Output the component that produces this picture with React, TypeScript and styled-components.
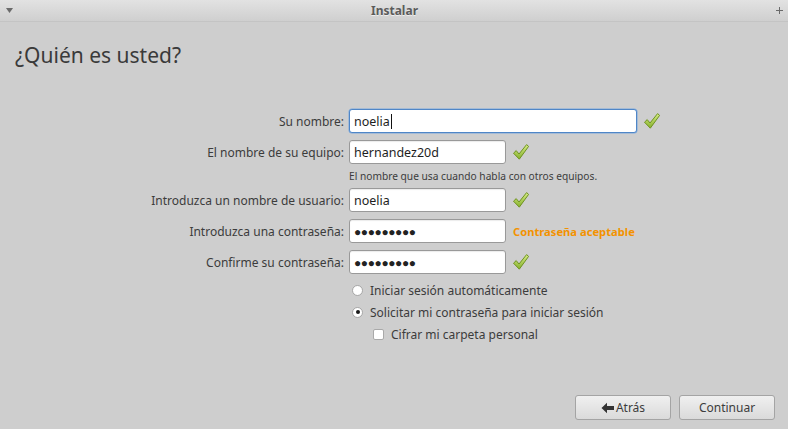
import React from "react";
import styled, { createGlobalStyle } from "styled-components";

const Global = createGlobalStyle`
  html, body { margin: 0; padding: 0; }
  body {
    width: 788px; height: 429px; overflow: hidden;
    background: #cecece;
    font-family: "Noto Sans", "Open Sans", sans-serif;
    color: #3c3c3c;
  }
  #root { width: 788px; height: 429px; }
`;

const Window = styled.div`
  width: 788px;
  height: 429px;
  display: flex;
  flex-direction: column;
  background: #cecece;
`;

const TitleBar = styled.div`
  height: 22px;
  flex: none;
  display: flex;
  align-items: center;
  justify-content: space-between;
  padding: 0 5px 0 6px;
  background: linear-gradient(#e2e2e2, #cfcfcf);
  border-bottom: 1px solid #c4c4c4;
  box-sizing: border-box;
`;

const TitleText = styled.div`
  font-size: 12px;
  font-weight: bold;
  color: #5b5b5b;
  text-shadow: 0 1px 0 #eeeeee;
`;

const Content = styled.div`
  flex: 1;
  display: flex;
  flex-direction: column;
  padding: 0 13px 9px 0;
`;

const Heading = styled.h1`
  margin: 19px 0 0 15px;
  font-size: 21px;
  font-weight: normal;
  color: #3a3a3a;
  line-height: 28px;
`;

const Form = styled.div`
  margin-top: 40px;
  display: flex;
  flex-direction: column;
`;

const Row = styled.div<{ $gap?: number }>`
  display: flex;
  align-items: center;
  height: 24px;
  margin-bottom: ${(p) => p.$gap ?? 7}px;
`;

const LabelCell = styled.div`
  width: 349px;
  flex: none;
  display: flex;
  justify-content: flex-end;
  padding-right: 5px;
  box-sizing: border-box;
  font-size: 12px;
  color: #3c3c3c;
`;

const Input = styled.div<{ $w: number; $focus?: boolean }>`
  width: ${(p) => p.$w}px;
  height: 24px;
  box-sizing: border-box;
  flex: none;
  background: #ffffff;
  border: 1px solid ${(p) => (p.$focus ? "#4f86c7" : "#999999")};
  border-radius: 3px;
  box-shadow: ${(p) => (p.$focus ? "0 0 0 0.5px #7aa7dd" : "inset 0 1px 1px rgba(0,0,0,0.08)")};
  display: flex;
  align-items: center;
  padding-left: 4px;
  font-size: 12.5px;
  color: #1e1e1e;
`;

const Caret = styled.span`
  display: inline-block;
  width: 1px;
  height: 15px;
  background: #111;
  margin-left: 1px;
`;

const Dots = styled.span`
  font-size: 12px;
  letter-spacing: -0.4px;
  color: #222;
`;

const Status = styled.div`
  margin-left: 6px;
  display: flex;
  align-items: center;
`;

const Warn = styled.span`
  margin-left: 1px;
  font-size: 11.2px;
  font-weight: bold;
  color: #f39200;
`;

const Hint = styled.div`
  margin: -3px 0 4px 349px;
  font-size: 10.2px;
  line-height: 16px;
  color: #3c3c3c;
  height: 16px;
`;

const Options = styled.div`
  display: flex;
  flex-direction: column;
  gap: 6px;
`;

const OptionRow = styled.div<{ $indent: number }>`
  display: flex;
  align-items: center;
  gap: 7px;
  padding-left: ${(p) => p.$indent}px;
  height: 16px;
  font-size: 12px;
  color: #3c3c3c;
`;

const Radio = styled.span<{ $on?: boolean }>`
  width: 11px;
  height: 11px;
  box-sizing: border-box;
  border-radius: 50%;
  border: 1px solid #a9a9a9;
  background: radial-gradient(circle, #ffffff 60%, #f1f1f1);
  display: flex;
  align-items: center;
  justify-content: center;
  &::after {
    content: "";
    width: 4px;
    height: 4px;
    border-radius: 50%;
    background: ${(p) => (p.$on ? "#1a1a1a" : "transparent")};
  }
`;

const Check = styled.span`
  width: 11px;
  height: 11px;
  box-sizing: border-box;
  border-radius: 2px;
  border: 1px solid #a9a9a9;
  background: #ffffff;
`;

const Spacer = styled.div`
  flex: 1;
`;

const Buttons = styled.div`
  display: flex;
  justify-content: flex-end;
  gap: 8px;
`;

const Button = styled.button`
  width: 96px;
  height: 25px;
  box-sizing: border-box;
  border: 1px solid #a4a4a4;
  border-radius: 3px;
  background: linear-gradient(#f0f0f0, #dadada);
  font-family: "Noto Sans", "Open Sans", sans-serif;
  font-size: 12px;
  color: #3c3c3c;
  display: flex;
  align-items: center;
  justify-content: center;
  gap: 1px;
  padding: 0;
`;

const CheckMark = () => (
  <svg width="18" height="18" viewBox="0 0 18 18">
    <defs>
      <linearGradient id="cg" x1="0" y1="0" x2="0" y2="1">
        <stop offset="0" stopColor="#d6ec86" />
        <stop offset="1" stopColor="#86b12c" />
      </linearGradient>
    </defs>
    <path
      d="M1.5 10.2 L4.2 7.6 L7 11 L14.6 1.6 L16.6 3.4 L7.3 16.2 Z"
      fill="url(#cg)"
      stroke="#6f9222"
      strokeWidth="1"
      strokeLinejoin="round"
    />
  </svg>
);

const DownTri = () => (
  <svg width="7" height="5" viewBox="0 0 7 5">
    <path d="M0 0 H7 L3.5 5 Z" fill="#6a6a6a" />
  </svg>
);

const Plus = () => (
  <svg width="7" height="7" viewBox="0 0 7 7">
    <path d="M3 0 H4 V3 H7 V4 H4 V7 H3 V4 H0 V3 H3 Z" fill="#6a6a6a" />
  </svg>
);

const BackArrow = () => (
  <svg width="14" height="12" viewBox="0 0 14 12">
    <path d="M0.5 6 L6 0.8 L6 4 L13 4 L13 8 L6 8 L6 11.2 Z" fill="#333333" />
  </svg>
);

export default function App() {
  return (
    <>
      <Global />
      <Window>
        <TitleBar>
          <DownTri />
          <TitleText>Instalar</TitleText>
          <Plus />
        </TitleBar>
        <Content>
          <Heading>¿Quién es usted?</Heading>
          <Form>
            <Row>
              <LabelCell>Su nombre:</LabelCell>
              <Input $w={288} $focus>
                noelia
                <Caret />
              </Input>
              <Status>
                <CheckMark />
              </Status>
            </Row>
            <Row>
              <LabelCell>El nombre de su equipo:</LabelCell>
              <Input $w={157}>hernandez20d</Input>
              <Status>
                <CheckMark />
              </Status>
            </Row>
            <Hint>El nombre que usa cuando habla con otros equipos.</Hint>
            <Row>
              <LabelCell>Introduzca un nombre de usuario:</LabelCell>
              <Input $w={157}>noelia</Input>
              <Status>
                <CheckMark />
              </Status>
            </Row>
            <Row>
              <LabelCell>Introduzca una contraseña:</LabelCell>
              <Input $w={157}>
                <Dots>●●●●●●●●●</Dots>
              </Input>
              <Status>
                <Warn>Contraseña aceptable</Warn>
              </Status>
            </Row>
            <Row $gap={8}>
              <LabelCell>Confirme su contraseña:</LabelCell>
              <Input $w={157}>
                <Dots>●●●●●●●●●</Dots>
              </Input>
              <Status>
                <CheckMark />
              </Status>
            </Row>
            <Options>
              <OptionRow $indent={352}>
                <Radio />
                Iniciar sesión automáticamente
              </OptionRow>
              <OptionRow $indent={352}>
                <Radio $on />
                Solicitar mi contraseña para iniciar sesión
              </OptionRow>
              <OptionRow $indent={373}>
                <Check />
                Cifrar mi carpeta personal
              </OptionRow>
            </Options>
          </Form>
          <Spacer />
          <Buttons>
            <Button>
              <BackArrow />
              Atrás
            </Button>
            <Button>Continuar</Button>
          </Buttons>
        </Content>
      </Window>
    </>
  );
}
